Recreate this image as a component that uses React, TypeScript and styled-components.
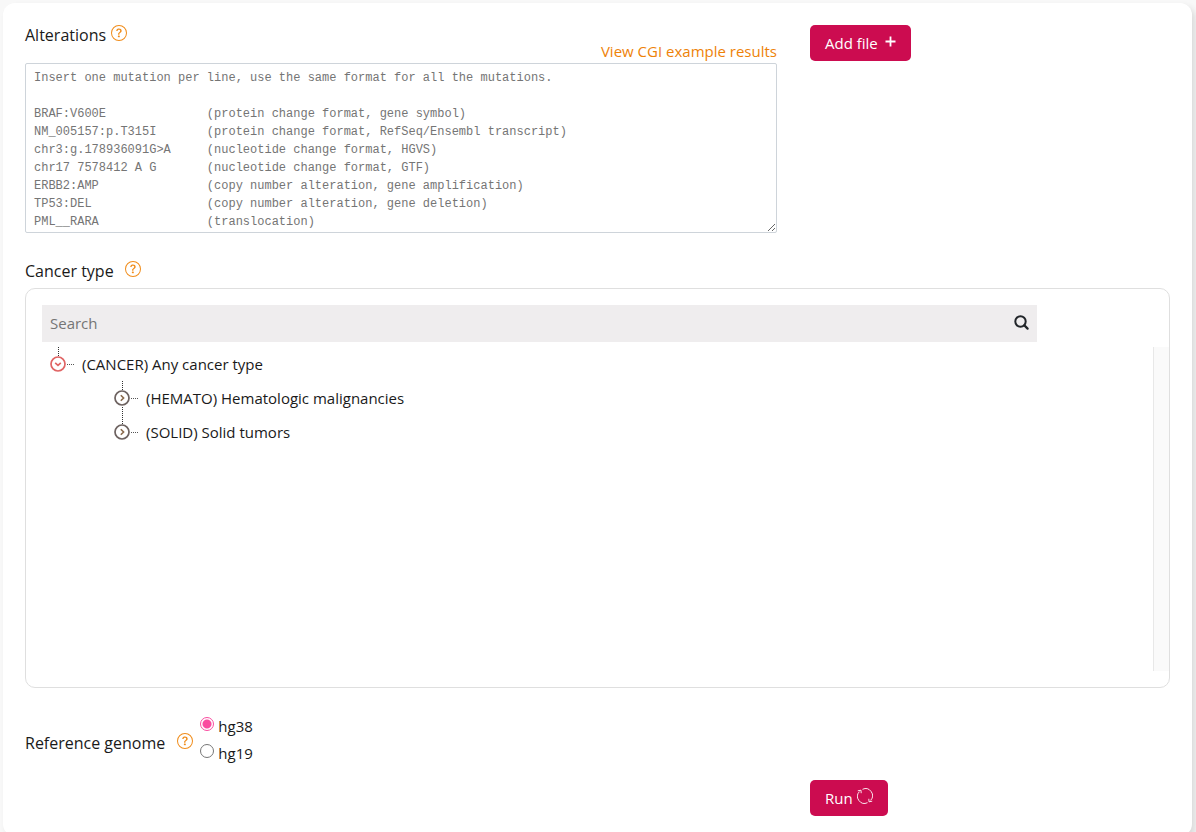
import React from "react";
import styled, { createGlobalStyle } from "styled-components";
import { BsQuestionCircle } from "react-icons/bs";

const GlobalStyle = createGlobalStyle`
  *, *::before, *::after { box-sizing: border-box; }
  body {
    margin: 0;
    background: #f8f8f8;
    color: #1a1a1a;
    font-family: "Open Sans", "Noto Sans", sans-serif;
    font-size: 15px;
    line-height: 24px;
  }
`;

const Page = styled.div`
  min-height: 100vh;
  padding: 3px 4px 0 3px;
  overflow: hidden;
`;

const Card = styled.form`
  background: #fff;
  border-radius: 12px;
  box-shadow: 4px 4px 6px #dcdcdc;
  padding: 22px 22px 20px;
`;

const Columns = styled.div`
  display: grid;
  grid-template-columns: 752fr 360fr;
  column-gap: 33px;
  align-items: start;
`;

const Field = styled.div`
  display: flex;
  flex-direction: column;
`;

const FieldHead = styled.div`
  display: flex;
  justify-content: space-between;
  height: 38px;
`;

const LabelRow = styled.div<{ $gap: number }>`
  display: flex;
  align-items: center;
  gap: ${(p) => p.$gap}px;
  height: 20px;
  font-size: 16px;
`;

const HelpButton = styled.button`
  display: flex;
  padding: 0 0 4px;
  border: 0;
  background: none;
  color: #f08c1a;
`;

const ExampleLink = styled.a`
  align-self: flex-end;
  color: #ee8208;
  text-decoration: none;
`;

const MutationInput = styled.textarea`
  display: block;
  width: 100%;
  height: 170px;
  padding: 5px 8px;
  border: 1px solid #ced4da;
  border-radius: 2px;
  background: #fff;
  font-family: "Liberation Mono", monospace;
  font-size: 12px;
  line-height: 18px;
  resize: both;
  overflow: hidden;
  &::placeholder { color: #757575; opacity: 1; }
`;

const PrimaryButton = styled.button<{ $gap: number }>`
  display: inline-flex;
  align-items: center;
  justify-self: start;
  gap: ${(p) => p.$gap}px;
  height: 36px;
  padding: 0 15px;
  border: 0;
  border-radius: 5px;
  background: #cc0c50;
  color: #fff;
  font: inherit;
  svg { margin-bottom: 4px; }
`;

const CancerSection = styled.section`
  margin-top: 28px;
`;

const Panel = styled.div`
  margin-top: 7px;
  height: 400px;
  padding: 16px 0 16px 16px;
  border: 1px solid #dfdfdf;
  border-radius: 10px;
  display: flex;
  flex-direction: column;
`;

const SearchBar = styled.div`
  display: flex;
  align-items: center;
  flex: none;
  height: 37px;
  margin-right: 132px;
  padding-right: 8px;
  background: #efedee;
`;

const SearchInput = styled.input`
  flex: 1;
  min-width: 0;
  padding: 0 8px 2px;
  border: 0;
  background: transparent;
  font: inherit;
  &::placeholder { color: #757575; opacity: 1; }
`;

const IconButton = styled.button`
  display: flex;
  padding: 0 0 3px;
  border: 0;
  background: none;
  color: #212529;
`;

const TreeArea = styled.div`
  flex: 1;
  display: flex;
  justify-content: space-between;
  margin-top: 5px;
`;

const ScrollTrack = styled.div`
  width: 16px;
  border-left: 1px solid #e8e8e8;
  background: #fafafa;
`;

const Tree = styled.ul<{ $nested?: boolean }>`
  list-style: none;
  margin: 0;
  padding: 0 0 0 ${(p) => (p.$nested ? 64 : 8)}px;
`;

const NodeRow = styled.div`
  display: flex;
  align-items: center;
  height: 34px;
  gap: 7px;
`;

const ToggleButton = styled.button`
  display: flex;
  padding: 0;
  border: 0;
  background: none;
`;

const GenomeSection = styled.fieldset`
  display: flex;
  align-items: center;
  margin: 24px 0 0;
  padding: 0;
  border: 0;
`;

const GenomeLabel = styled(LabelRow)`
  height: 28px;
  padding-top: 8px;
`;

const Options = styled.div`
  margin-left: 7px;
`;

const Option = styled.label`
  display: flex;
  align-items: center;
  gap: 4px;
  height: 27px;
`;

const Radio = styled.input`
  appearance: none;
  width: 14px;
  height: 14px;
  margin: 0 0 4px;
  border: 1px solid #767676;
  border-radius: 50%;
  background: #fff;
  &:checked {
    border-color: #fa4ca0;
    background: radial-gradient(circle, #fa4ca0 4px, #fff 5px);
  }
`;

const Actions = styled(Columns)`
  margin-top: 14px;
`;

function Help({ topic }: { topic: string }) {
  return (
    <HelpButton type="button" aria-label={`Help about ${topic}`}>
      <BsQuestionCircle size={16} />
    </HelpButton>
  );
}

function Toggle({ open, last }: { open?: boolean; last?: boolean }) {
  const color = open ? "#e06464" : "#6d6260";
  return (
    <ToggleButton type="button" aria-label={open ? "Collapse" : "Expand"} aria-expanded={!!open}>
      <svg width="25" height="34" viewBox="0 0 25 34" fill="none">
        <path d={last || open ? "M8.5 0V9" : "M8.5 0V9M8.5 26V34"} stroke="#333" strokeDasharray="1 1" />
        <path d="M17 17.5H25" stroke="#555" strokeDasharray="1 1" />
        <circle cx="8" cy="17" r="7" stroke={color} strokeWidth="1.7" />
        <path
          d={open ? "M5.2 15.8L8 18.4L10.8 15.8" : "M6.8 14.2L9.6 17L6.8 19.8"}
          stroke={open ? color : "#8a6a4c"}
          strokeWidth="1.6"
        />
      </svg>
    </ToggleButton>
  );
}

const placeholder = [
  "Insert one mutation per line, use the same format for all the mutations.",
  "",
  "BRAF:V600E              (protein change format, gene symbol)",
  "NM_005157:p.T315I       (protein change format, RefSeq/Ensembl transcript)",
  "chr3:g.178936091G>A     (nucleotide change format, HGVS)",
  "chr17 7578412 A G       (nucleotide change format, GTF)",
  "ERBB2:AMP               (copy number alteration, gene amplification)",
  "TP53:DEL                (copy number alteration, gene deletion)",
  "PML__RARA               (translocation)",
].join("\n");

export default function App() {
  return (
    <>
      <GlobalStyle />
      <Page>
        <Card onSubmit={(e: React.FormEvent) => e.preventDefault()}>
          <Columns>
            <Field>
              <FieldHead>
                <LabelRow $gap={5}>
                  <label htmlFor="alterations">Alterations</label>
                  <Help topic="alterations" />
                </LabelRow>
                <ExampleLink href="#example">View CGI example results</ExampleLink>
              </FieldHead>
              <MutationInput id="alterations" placeholder={placeholder} />
            </Field>
            <PrimaryButton type="button" $gap={7}>
              Add file
              <svg width="11" height="11" viewBox="0 0 11 11" fill="none" stroke="currentColor" strokeWidth="1.8">
                <path d="M5.5 0.5V10.5M0.5 5.5H10.5" />
              </svg>
            </PrimaryButton>
          </Columns>

          <CancerSection>
            <LabelRow $gap={11}>
              <label htmlFor="cancer-search">Cancer type</label>
              <Help topic="cancer type" />
            </LabelRow>
            <Panel>
              <SearchBar>
                <SearchInput id="cancer-search" type="text" placeholder="Search" />
                <IconButton type="button" aria-label="Search">
                  <svg width="15" height="15" viewBox="0 0 15 15" fill="none" stroke="currentColor">
                    <circle cx="6.5" cy="6.5" r="5.2" strokeWidth="2" />
                    <path d="M10.4 10.4L13.6 13.6" strokeWidth="2.2" strokeLinecap="round" />
                  </svg>
                </IconButton>
              </SearchBar>
              <TreeArea>
                <Tree>
                  <li>
                    <NodeRow>
                      <Toggle open />
                      (CANCER) Any cancer type
                    </NodeRow>
                    <Tree $nested>
                      <li>
                        <NodeRow>
                          <Toggle />
                          (HEMATO) Hematologic malignancies
                        </NodeRow>
                      </li>
                      <li>
                        <NodeRow>
                          <Toggle last />
                          (SOLID) Solid tumors
                        </NodeRow>
                      </li>
                    </Tree>
                  </li>
                </Tree>
                <ScrollTrack />
              </TreeArea>
            </Panel>
          </CancerSection>

          <GenomeSection aria-label="Reference genome">
            <GenomeLabel $gap={12}>
              <span>Reference genome</span>
              <Help topic="reference genome" />
            </GenomeLabel>
            <Options>
              <Option>
                <Radio type="radio" name="genome" defaultChecked />
                hg38
              </Option>
              <Option>
                <Radio type="radio" name="genome" />
                hg19
              </Option>
            </Options>
          </GenomeSection>

          <Actions>
            <span />
            <PrimaryButton type="submit" $gap={4}>
              Run
              <svg width="16" height="16" viewBox="0 0 16 16" fill="none" stroke="currentColor" strokeWidth="0.9">
                <path d="M5.5 1.3A7 7 0 0 1 13.6 12.4M10.5 14.7A7 7 0 0 1 2.4 3.6" />
                <path d="M0.8 2.8L4 2.2L4.2 5.2M15.2 13.2L12 13.8L11.8 10.8" />
              </svg>
            </PrimaryButton>
          </Actions>
        </Card>
      </Page>
    </>
  );
}
